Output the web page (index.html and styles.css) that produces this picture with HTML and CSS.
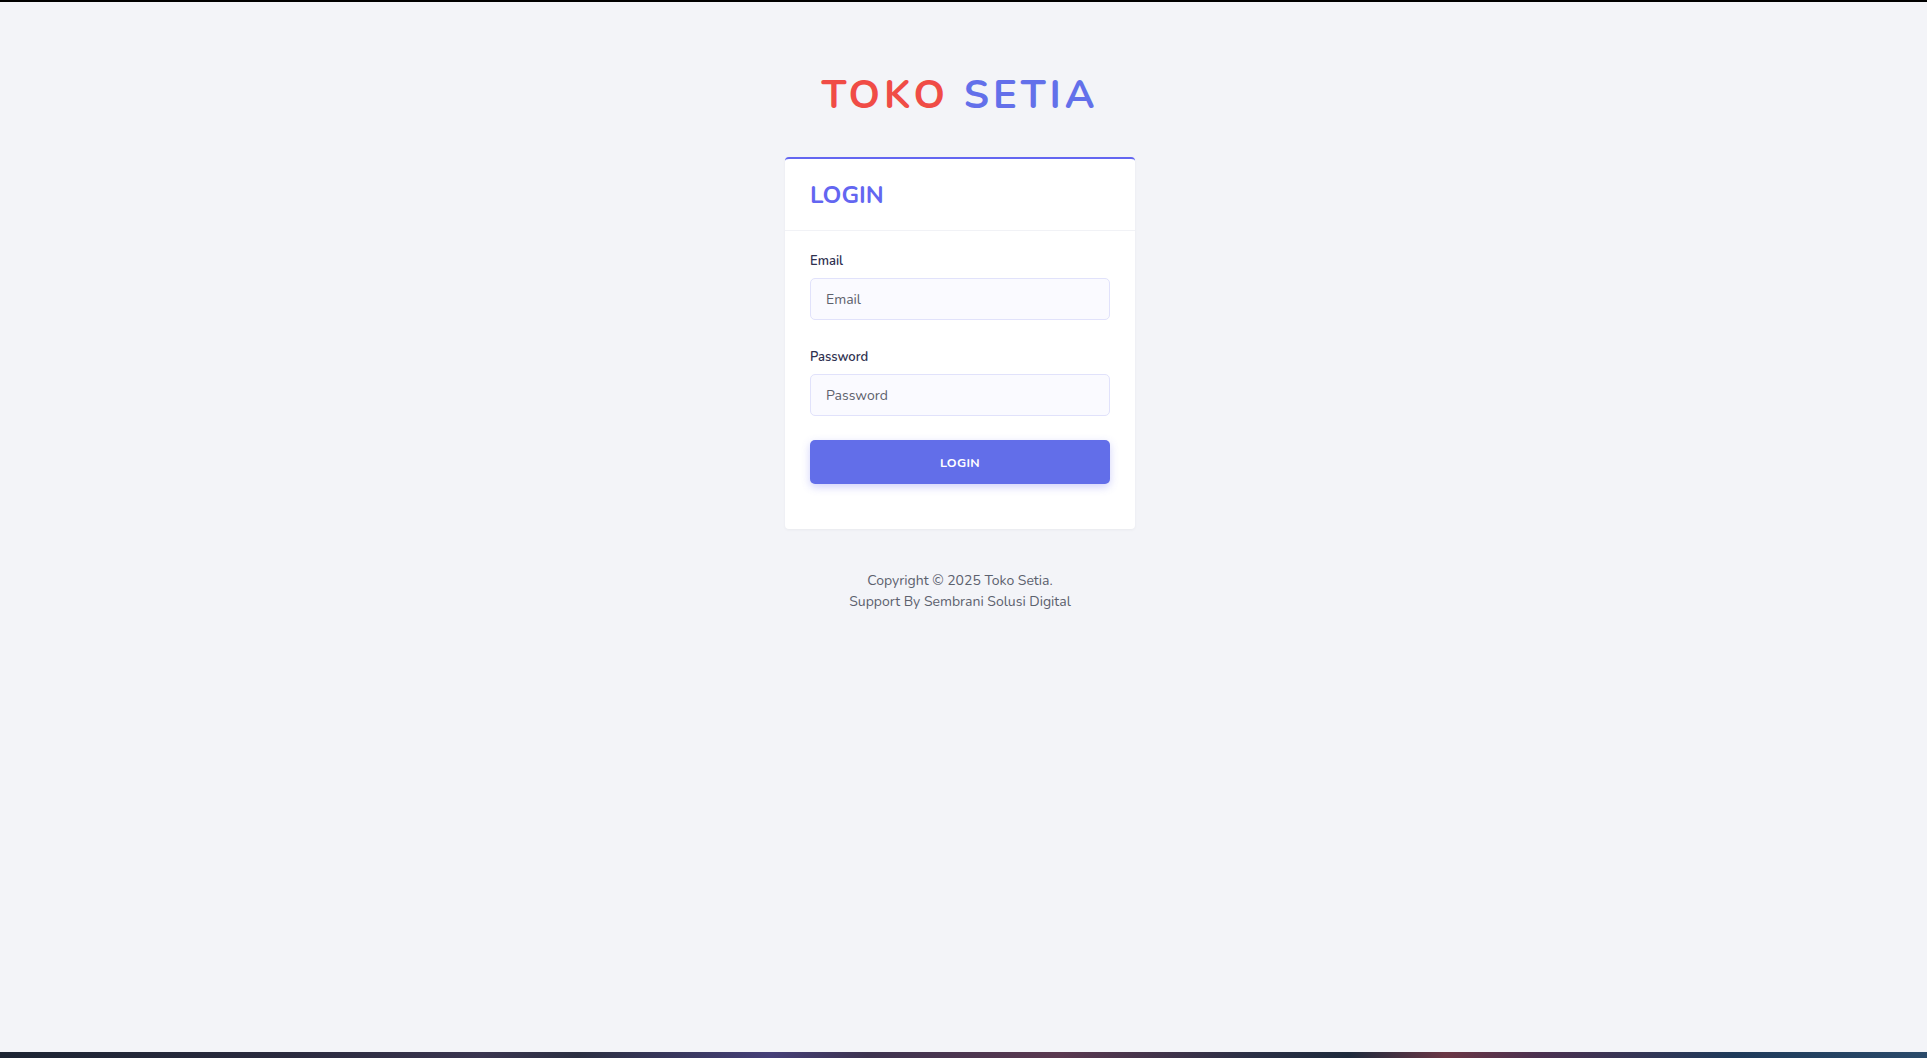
FILE: index.html
```html
<!DOCTYPE html>
<html lang="id">
<head>
<meta charset="utf-8">
<title>Login - Toko Setia</title>
<link rel="stylesheet" href="styles.css">
</head>
<body>
<div class="page">
  <main class="content">
    <h1 class="brand"><span class="brand-red">TOKO</span> <span class="brand-blue">SETIA</span></h1>
    <section class="card">
      <header class="card-header">
        <h2 class="card-title">LOGIN</h2>
      </header>
      <form class="card-body">
        <div class="field">
          <label class="label" for="email">Email</label>
          <input class="input" id="email" type="email" placeholder="Email">
        </div>
        <div class="field">
          <label class="label" for="password">Password</label>
          <input class="input" id="password" type="password" placeholder="Password">
        </div>
        <button class="btn" type="button">LOGIN</button>
      </form>
    </section>
    <footer class="footer">
      <p>Copyright © 2025 Toko Setia.</p>
      <p>Support By Sembrani Solusi Digital</p>
    </footer>
  </main>
  <div class="strip"></div>
</div>
</body>
</html>
```

FILE: styles.css
```css
* { box-sizing: border-box; }
html, body { margin: 0; padding: 0; }
body {
  background: #f3f4f8;
  font-family: "Nunito", "Lato", "Noto Sans", sans-serif;
  color: #374151;
}
.page {
  min-height: 1058px;
  display: flex;
  flex-direction: column;
  border-top: 2px solid #000;
}
.content {
  flex: 1;
  display: flex;
  flex-direction: column;
  align-items: center;
  padding-top: 68.5px;
  padding-right: 7px;
}
.brand {
  margin: 0;
  font-size: 40px;
  line-height: 48px;
  font-weight: 700;
  letter-spacing: 4px;
}
.brand-red { color: #f04c46; }
.brand-blue { color: #6370ea; }
.card {
  margin-top: 38.5px;
  width: 350px;
  background: #fff;
  border-top: 2px solid #6366f1;
  border-radius: 4px;
  box-shadow: 0 1px 3px rgba(30, 30, 60, 0.05);
}
.card-header {
  padding: 22px 25px 20px 25px;
  border-bottom: 1px solid #f1f2f6;
}
.card-title {
  margin: 0;
  font-size: 24px;
  line-height: 29px;
  font-weight: 700;
  color: #6366f1;
}
.card-body {
  padding: 21px 25px 45px 25px;
}
.field { margin-bottom: 28px; }
.field:last-of-type { margin-bottom: 0; }
.label {
  display: block;
  font-size: 13px;
  line-height: 18px;
  font-weight: 600;
  color: #2f3150;
  margin-bottom: 8px;
}
.input {
  display: block;
  width: 300px;
  height: 42px;
  padding: 0 15px;
  border: 1px solid #e1e2fb;
  border-radius: 5px;
  background: #fafaff;
  font-family: inherit;
  font-size: 14px;
  color: #374151;
  outline: none;
}
.input::placeholder { color: #5d616c; }
.btn {
  display: block;
  width: 300px;
  height: 44px;
  margin-top: 24px;
  border: 0;
  border-radius: 5px;
  background: #626ee9;
  color: #fff;
  font-family: inherit;
  font-size: 12.5px;
  font-weight: 700;
  letter-spacing: 0.3px;
  box-shadow: 0 3px 8px rgba(99, 102, 241, 0.3);
}
.footer {
  margin-top: 41px;
  text-align: center;
  font-size: 14px;
  line-height: 21px;
  color: #5c616e;
}
.footer p { margin: 0; }
.strip {
  height: 6px;
  background: linear-gradient(90deg, #1c2433 0%, #2a2a3e 15%, #3a3550 25%, #2b2f42 30%, #453f78 40%, #3d3350 45%, #5a3850 55%, #2a2f45 65%, #1e2a3c 70%, #6a3645 75%, #4a3050 80%, #1e3a5a 90%, #2a4a6a 100%);
}
```
